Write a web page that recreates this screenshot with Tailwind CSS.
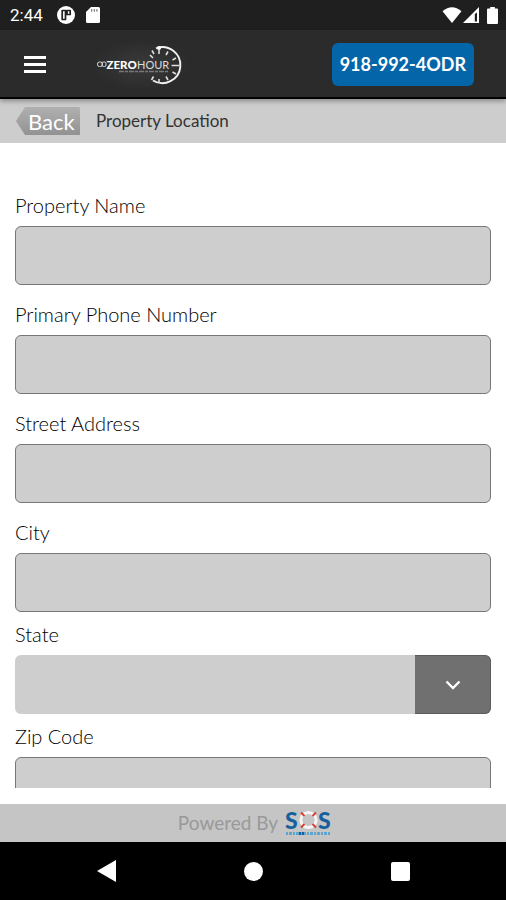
<!DOCTYPE html>
<html lang="en">
<head>
<meta charset="utf-8">
<meta name="viewport" content="width=device-width, initial-scale=1">
<title>Property Location</title>
<script src="https://cdn.jsdelivr.net/npm/@tailwindcss/browser@4"></script>
</head>
<body class="flex h-screen flex-col overflow-hidden bg-white font-['Lato',sans-serif] text-[#333]">

<!-- Status bar -->
<div class="flex h-[30px] shrink-0 items-center bg-[#1f1f1f] pr-2 pl-[10px] text-white">
  <span class="font-['Roboto',sans-serif] text-[17px] leading-5">2:44</span>
  <svg class="ml-[14px] size-[18px]" viewBox="0 0 18 18" aria-hidden="true"><circle cx="9" cy="9" r="9" fill="#fff"/><path d="M5.2 4.5h3.3v9H5.2zM10 4.500h3.200v4H10z" fill="none" stroke="#1f1f1f" stroke-width="1.700" stroke-linejoin="round"/></svg>
  <svg class="ml-[11px] h-4 w-[14px]" viewBox="0 0 14 16" aria-hidden="true"><path d="M5 0h7.500Q14 0 14 1.500v13Q14 16 12.500 16h-11Q0 16 0 14.500V5z" fill="#fff"/><path d="M5.700 2v2.800M8.300 2v2.800M10.900 2v2.800" stroke="#777" stroke-width="1.100"/></svg>
  <svg class="ml-auto h-4 w-5" viewBox="0 0 20 16" aria-hidden="true"><path d="M0.500 4.200Q10-3.500 19.500 4.200L10 16z" fill="#fff"/></svg>
  <svg class="ml-px size-4" viewBox="0 0 16 16" aria-hidden="true"><path d="M16 0v16H0z" fill="#fff"/><path d="M14 5.500v9h-2.200V7z" fill="#1f1f1f"/></svg>
  <svg class="ml-2 h-[17px] w-[11px]" viewBox="0 0 11 17" aria-hidden="true"><path d="M3.200 0h4.600v1.500H10q1 0 1 1V16q0 1-1 1H1q-1 0-1-1V2.500q0-1 1-1h2.200z" fill="#fff"/></svg>
</div>

<!-- App header -->
<header class="z-10 flex h-[69px] shrink-0 items-center border-b-2 border-black bg-[#2b2b2b] pt-[2px] pr-8 pl-6 shadow-[0_2px_5px_rgba(0,0,0,0.35)]">
  <button type="button" aria-label="Menu" class="flex w-[22px] flex-col gap-1">
    <span class="h-[3px] bg-white"></span>
    <span class="h-[3px] bg-white"></span>
    <span class="h-[3px] bg-white"></span>
  </button>
  <svg class="ml-[46px] h-[50px] w-[98px]" viewBox="92 40 98 50" role="img" aria-label="Zero Hour">
    <defs><radialGradient id="glow"><stop offset="0" stop-color="#3a3a3a"/><stop offset="1" stop-color="#2b2b2b"/></radialGradient></defs>
    <rect x="92" y="40" width="98" height="50" fill="url(#glow)"/>
    <path d="M156 48.300A18 18 0 1 1 153 80.500" fill="none" stroke="#f2f2f2" stroke-width="1.900"/>
    <circle cx="159" cy="48" r="2" fill="#fff"/>
    <g stroke="#ddd" stroke-width="1.600">
      <path d="M159 50v4M168 51.500l-2 3.500M176 58l-3.500 2M179.500 65.500h-8M176 74l-3.500-2M168 80l-2-3.500M159 83v-4M151.500 80l2-3.500M152 50.500l2 3.500M153 58l-3-3"/>
    </g>
    <rect x="97.500" y="62" width="5" height="4.500" rx="2" fill="none" stroke="#ddd"/>
    <rect x="102" y="62" width="4" height="4.500" rx="1.500" fill="none" stroke="#ddd"/>
    <text x="106.500" y="69" fill="#fff" font-family="Lato, sans-serif" font-size="11.500" font-weight="900">ZERO</text>
    <text x="137" y="69" fill="#ddd" font-family="Lato, sans-serif" font-size="11">HOUR</text>
    <path d="M119 71.500h49" stroke="#777" stroke-width="1.500" stroke-dasharray="5 1 3 1"/>
  </svg>
  <a href="tel:9189924637" class="ml-auto flex h-[43px] items-center rounded-md bg-[#0565a9] px-2 text-[18px] font-bold text-white">918-992-4ODR</a>
</header>

<!-- Page title bar -->
<div class="flex h-11 shrink-0 items-center bg-[#cdcdcd] pl-4">
  <button type="button" class="flex h-7 w-16 items-center bg-linear-to-b from-[#b0b0b0] to-[#929292] pl-3 text-[22px] text-white [clip-path:polygon(0_50%,9px_0,calc(100%_-_1px)_0,100%_1px,100%_100%,9px_100%)]">Back</button>
  <h1 class="ml-4 text-[17px]">Property Location</h1>
</div>

<!-- Form -->
<main class="mb-4 min-h-0 flex-1 overflow-hidden px-[15px] pt-[50px]">
  <form class="flex flex-col gap-[10px] text-[20px] leading-6 font-light text-black">
    <div class="flex flex-col gap-[17px]">
      <div class="flex flex-col gap-[9px]">
        <label for="name">Property Name</label>
        <input id="name" type="text" class="h-[59px] w-full rounded-md border border-[#777] bg-[#cecece] px-3">
      </div>
      <div class="flex flex-col gap-[9px]">
        <label for="phone">Primary Phone Number</label>
        <input id="phone" type="tel" class="h-[59px] w-full rounded-md border border-[#777] bg-[#cecece] px-3">
      </div>
      <div class="flex flex-col gap-[9px]">
        <label for="street">Street Address</label>
        <input id="street" type="text" class="h-[59px] w-full rounded-md border border-[#777] bg-[#cecece] px-3">
      </div>
      <div class="flex flex-col gap-[9px]">
        <label for="city">City</label>
        <input id="city" type="text" class="h-[59px] w-full rounded-md border border-[#777] bg-[#cecece] px-3">
      </div>
    </div>
    <div class="flex flex-col gap-[9px]">
      <label for="state">State</label>
      <div class="relative">
        <select id="state" class="block h-[59px] w-full appearance-none rounded-md bg-[#cecece] px-3"><option value=""></option></select>
        <div class="pointer-events-none absolute inset-y-0 right-0 flex w-[76px] items-center justify-center rounded-r-md border-y border-r border-[#5c5c5c] bg-[#707070]">
          <svg class="h-[10px] w-4" viewBox="0 0 16 10" aria-hidden="true"><path d="M1.500 1.500L8 8l6.500-6.500" fill="none" stroke="#fff" stroke-width="2.400"/></svg>
        </div>
      </div>
    </div>
    <div class="flex flex-col gap-[9px]">
      <label for="zip">Zip Code</label>
      <input id="zip" type="text" class="h-[59px] w-full rounded-md border border-[#777] bg-[#cecece] px-3">
    </div>
  </form>
</main>

<!-- Footer -->
<footer class="flex h-[38px] shrink-0 items-center justify-center gap-1.5 bg-[#c5c5c5] pl-1 text-[19px] text-[#999]">
  <span>Powered By</span>
  <svg class="h-[38px] w-12" viewBox="283 804 48 38" role="img" aria-label="SOS">
    <g fill="#17609f" font-family="Lato, sans-serif" font-size="23" font-weight="900"><text x="284" y="829">S</text><text x="317" y="829">S</text></g>
    <circle cx="307.500" cy="820" r="7.600" fill="none" stroke="#f4f4f4" stroke-width="3"/>
    <path d="M300 812.500l3.500 3.500M315 812.500l-3.500 3.500M300 827.500l3.500-3.500M315 827.500l-3.500-3.500" stroke="#d8392f" stroke-width="1.800"/>
    <path d="M285 833.500h45" stroke="#5fa6cf" stroke-width="3" stroke-dasharray="2 1 3 1"/>
    <path d="M298 833.500h5" stroke="#17609f" stroke-width="3" stroke-dasharray="2 1"/>
  </svg>
</footer>

<!-- System navigation -->
<nav class="flex h-[58px] shrink-0 items-center justify-center gap-32 bg-black" aria-label="System">
  <button type="button" aria-label="Back"><svg class="h-[22px] w-[19px]" viewBox="0 0 19 22"><path d="M19 0v22L0 11z" fill="#fff"/></svg></button>
  <button type="button" aria-label="Home" class="size-[19px] rounded-full bg-white"></button>
  <button type="button" aria-label="Recent apps" class="size-[19px] rounded-xs bg-white"></button>
</nav>
</body>
</html>
